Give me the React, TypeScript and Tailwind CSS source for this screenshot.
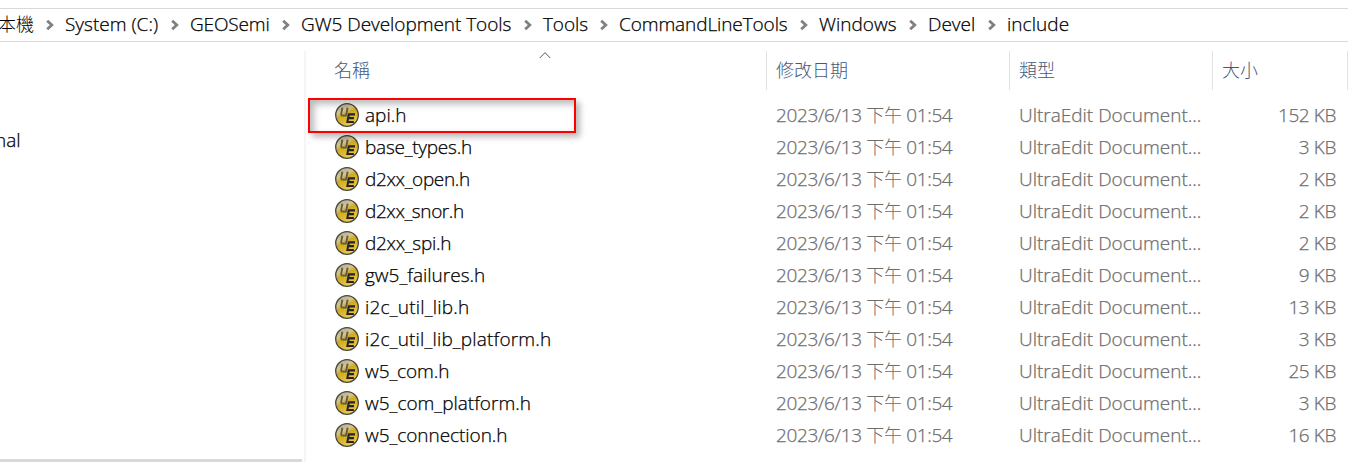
import React from "react";

const crumbs = [
  { label: "System (C:)", box: "w-[125px]", track: "tracking-[0px]" },
  { label: "GEOSemi", box: "w-[111px]", track: "tracking-[-0.15px]" },
  { label: "GW5 Development Tools", box: "w-[242px]", track: "tracking-[-0.05px]" },
  { label: "Tools", box: "w-[76px]", track: "tracking-[-0.1px]" },
  { label: "CommandLineTools", box: "w-[200px]", track: "tracking-[-0.1px]" },
  { label: "Windows", box: "w-[109px]", track: "tracking-[0px]" },
  { label: "Devel", box: "w-[79px]", track: "tracking-[0px]" },
  { label: "include", box: "w-[80px]", track: "tracking-[0.05px]" },
];

const files = [
  { name: "api.h", size: "152 KB", track: "tracking-[0px]" },
  { name: "base_types.h", size: "3 KB", track: "tracking-[-0.25px]" },
  { name: "d2xx_open.h", size: "2 KB", track: "tracking-[-0.35px]" },
  { name: "d2xx_snor.h", size: "2 KB", track: "tracking-[-0.4px]" },
  { name: "d2xx_spi.h", size: "2 KB", track: "tracking-[-0.3px]" },
  { name: "gw5_failures.h", size: "9 KB", track: "tracking-[0px]" },
  { name: "i2c_util_lib.h", size: "13 KB", track: "tracking-[0.2px]" },
  { name: "i2c_util_lib_platform.h", size: "3 KB", track: "tracking-[0.17px]" },
  { name: "w5_com.h", size: "25 KB", track: "tracking-[-0.1px]" },
  { name: "w5_com_platform.h", size: "3 KB", track: "tracking-[0px]" },
  { name: "w5_connection.h", size: "16 KB", track: "tracking-[-0.05px]" },
];

function Chevron() {
  return (
    <svg className="block h-3 w-2 shrink-0" viewBox="0 0 8 12" fill="none" stroke="#808080" strokeWidth="2.8">
      <path d="M1.2 1.7 5.8 6 1.2 10.3" />
    </svg>
  );
}

function UltraEditIcon() {
  return (
    <svg className="block h-6 w-6 shrink-0" viewBox="0 0 24 24">
      <defs>
        <linearGradient id="gold" x1="0.1" y1="0" x2="0.6" y2="1">
          <stop offset="0" stopColor="#aaa69a" />
          <stop offset="0.35" stopColor="#d6c587" />
          <stop offset="0.5" stopColor="#cfa91f" />
          <stop offset="1" stopColor="#efcb48" />
        </linearGradient>
      </defs>
      <circle cx="12" cy="12" r="11.3" fill="url(#gold)" stroke="#454641" strokeWidth="1.3" />
      <path d="M7.4 4.8 6.2 10.6q-.3 2 1.4 2h3.4l1.6-8" fill="none" stroke="#5a5950" strokeWidth="1.8" />
      <path d="M20 11.4h-6.2l-1.4 7.6h6.5M13 15.1h6" fill="none" stroke="#262724" strokeWidth="2.1" />
    </svg>
  );
}

export default function App() {
  return (
    <div className="flex h-[462px] w-[1348px] flex-col overflow-hidden bg-white pt-2 font-['Open_Sans','Noto_Sans_CJK_TC',sans-serif] text-[19px] font-light text-black [-webkit-text-stroke:0.25px]">
      <nav className="flex h-[34px] shrink-0 items-center border-y border-[#d9d9d9] whitespace-nowrap">
        <span className="flex w-[46px] shrink-0 justify-start">
          <span className="-ml-0.5 -mt-0.5 text-[18px] [-webkit-text-stroke:0]">本機</span>
        </span>
        {crumbs.map((c) => (
          <div key={c.label} className={`flex shrink-0 items-center ${c.box}`}>
            <span className="flex w-[19px] shrink-0">
              <Chevron />
            </span>
            <span className={`-mt-0.5 ${c.track}`}>{c.label}</span>
          </div>
        ))}
      </nav>
      <div className="flex min-h-0 flex-1">
        <aside className="flex w-[304px] shrink-0 flex-col justify-between">
          <span className="-ml-[5px] mt-[84px] leading-[28px]">nal</span>
          <div className="h-[3px] w-[302px] bg-[#d9d9d9]" />
        </aside>
        <main className="mt-[9px] flex w-[1044px] flex-col border-l-2 border-[#f5f5f5]">
          <div className="flex h-[39px] shrink-0 text-[18px] leading-[38px] text-[#44597a] [-webkit-text-stroke:0]">
            <div className="relative w-[460px] pl-[28px]">
              名稱
              <svg className="absolute left-[233px] top-0 h-2 w-3" viewBox="0 0 12 8" fill="none" stroke="#555">
                <path d="M.7 7 6 1.7 11.3 7" />
              </svg>
            </div>
            <div className="w-[243px] border-l border-[#e2e2e2] pl-[9px]">修改日期</div>
            <div className="w-[203px] border-l border-[#e2e2e2] pl-[9px]">類型</div>
            <div className="w-[136px] border-x border-[#e2e2e2] pl-[9px]">大小</div>
          </div>
          <div className="relative mt-[9px] flex flex-col">
            {files.map((f) => (
              <div key={f.name} className="flex h-8 shrink-0 items-center leading-8 whitespace-nowrap text-[#6d6d6d]">
                <div className="flex w-[470px] shrink-0 items-center gap-1.5 pl-[29px] text-black">
                  <UltraEditIcon />
                  <span className={f.track}>{f.name}</span>
                </div>
                <span className="w-[243px] shrink-0 tracking-[-0.35px]">
                  2023/6/13 <span className="text-[18px] [-webkit-text-stroke:0]">下午</span> 01:54
                </span>
                <span className="w-[203px] shrink-0 tracking-[0px]">UltraEdit Document...</span>
                <span className="w-[114px] shrink-0 text-right tracking-[-0.4px]">{f.size}</span>
              </div>
            ))}
            <div className="absolute -top-px left-0.5 h-[35px] w-[268px] border-2 border-[#ff0000] shadow-[4px_4px_6px_rgba(0,0,0,0.28),inset_4px_4px_7px_rgba(0,0,0,0.28)]" />
          </div>
        </main>
      </div>
    </div>
  );
}
